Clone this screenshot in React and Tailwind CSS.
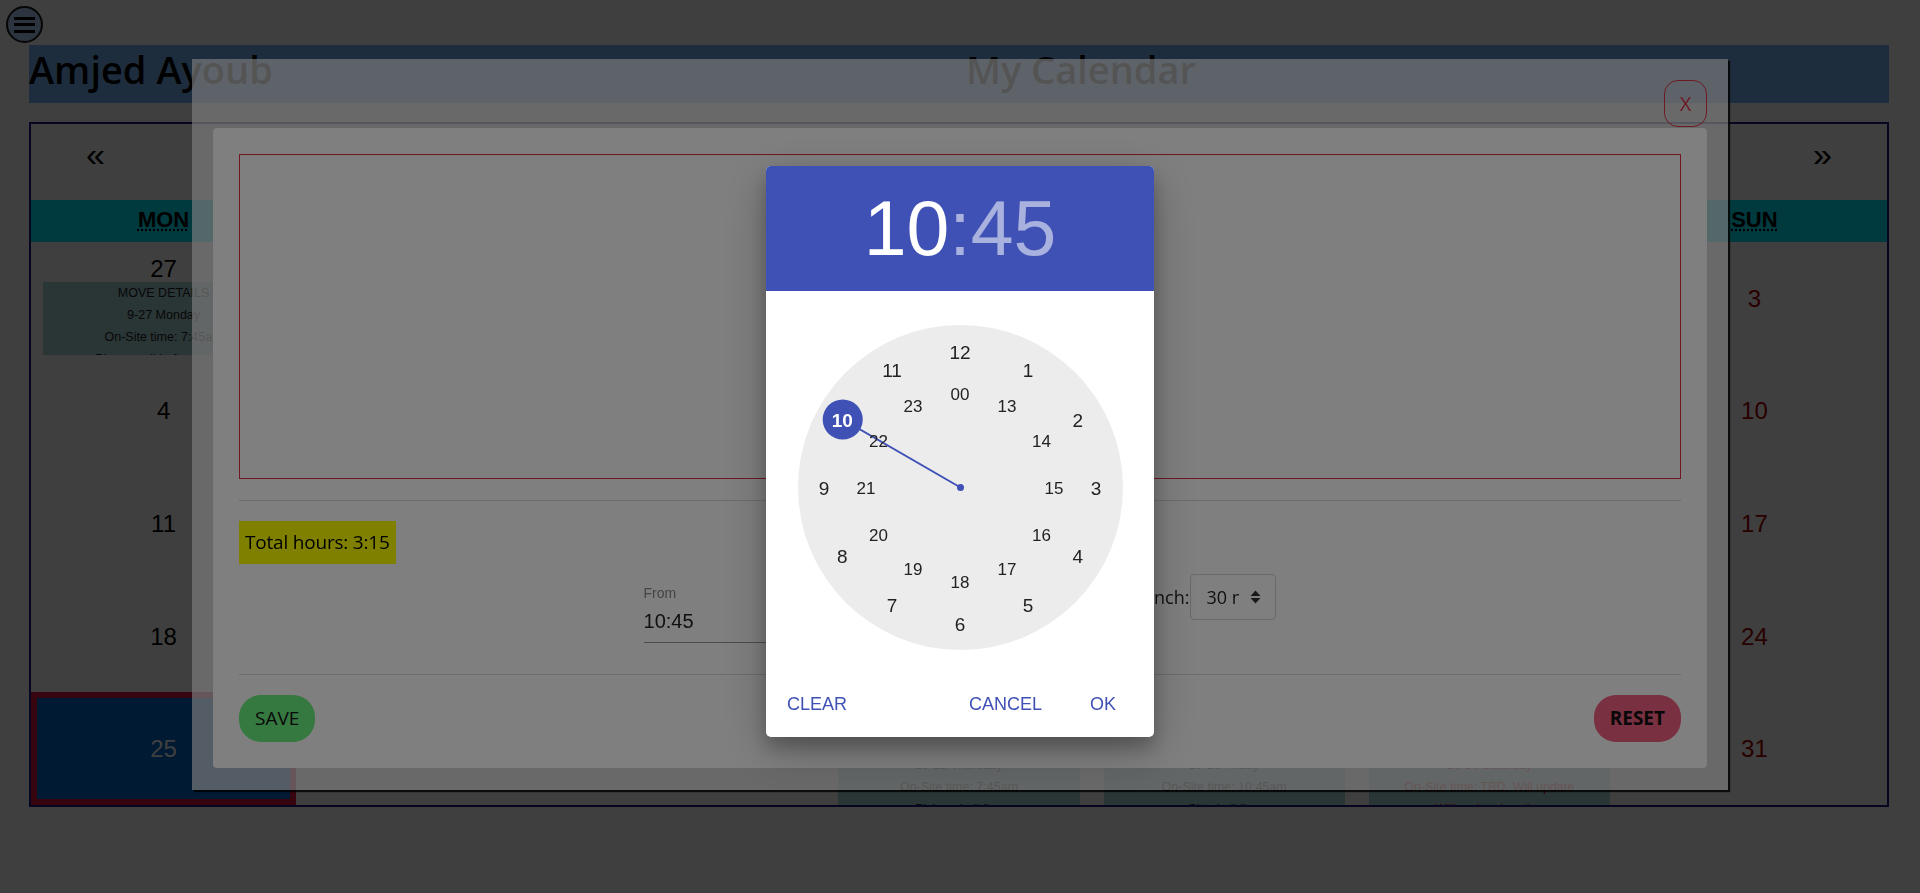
import React from 'react';

const SEGOE = { fontFamily: '"Open Sans", "Noto Sans", sans-serif' };
const ARIAL = { fontFamily: '"Liberation Sans", Arial, sans-serif' };

const DAYS = [
    ['MON', 'Monday'],
    ['TUE', 'Tuesday'],
    ['WED', 'Wednesday'],
    ['THU', 'Thursday'],
    ['FRI', 'Friday'],
    ['SAT', 'Saturday'],
    ['SUN', 'Sunday'],
];

const WEEKS = [
    [27, 28, 29, 30, 1, 2, 3],
    [4, 5, 6, 7, 8, 9, 10],
    [11, 12, 13, 14, 15, 16, 17],
    [18, 19, 20, 21, 22, 23, 24],
    [25, 26, 27, 28, 29, 30, 31],
];

// moves booked on the calendar, keyed "week-day"
const EVENTS = {
    '0-0': { date: '9-27 Monday', time: 'On-Site time: 7:45am', note: 'Please call before arrival' },
    '4-3': { date: '10-28 Thursday', time: 'On-Site time: 7:45am', note: 'Pickup: building' },
    '4-4': { date: '10-29 Friday', time: 'On-Site time: 10:45am', note: 'Site: building' },
    '4-5': { date: '10-30 Saturday', time: 'On-Site time: TBD. Will update', note: 'Will update location', red: true },
};

const OUTER = [12, 1, 2, 3, 4, 5, 6, 7, 8, 9, 10, 11];
const INNER = ['00', 13, 14, 15, 16, 17, 18, 19, 20, 21, 22, 23];

const EventCard = ({ ev }) => (
    <div className={`self-stretch mx-[12px] bg-[#a9d5d9] text-center text-[12.5px] leading-[22px] ${ev.red ? 'text-[#d00000]' : 'text-[#222]'}`}>
        <div>MOVE DETAILS</div>
        <div>{ev.date}</div>
        <div>{ev.time}</div>
        <div>{ev.note}</div>
    </div>
);

const DayCell = ({ w, d, day }) => {
    const ev = EVENTS[`${w}-${d}`];
    const today = w === 4 && d === 0;
    const sunday = d === 6;
    if (today) {
        return (
            <div className="flex items-center justify-center border-[6px] border-[#dc143c] bg-[#0068cc] text-white text-[24px] overflow-hidden">
                {day}
            </div>
        );
    }
    return (
        <div className={`min-h-0 flex flex-col items-center overflow-hidden ${ev ? 'pt-[13px]' : 'justify-center'}`}>
            <div className={`text-[24px] leading-[27px] ${sunday ? 'text-[#a00000]' : 'text-black'}`}>{day}</div>
            {ev && <EventCard ev={ev} />}
        </div>
    );
};

const Calendar = () => (
    <div style={ARIAL} className="ml-[29px] mt-[19px] w-[1860px] h-[685px] border-2 border-[#1a1a80] flex flex-col">
        <div className="shrink-0 h-[76px] flex items-center justify-between px-[55px] pb-[16px] text-[34px] text-black">
            <span>«</span>
            <span>»</span>
        </div>
        <div className="shrink-0 h-[42px] grid grid-cols-7 items-center bg-[#00e5f8] text-center text-[22px] font-bold text-black">
            {DAYS.map(([abbr, full]) => (
                <div key={abbr} className="pb-[3px]">
                    <abbr title={full}>{abbr}</abbr>
                </div>
            ))}
        </div>
        <div className="shrink-0 h-[563px] grid grid-cols-7 grid-rows-5 overflow-hidden">
            {WEEKS.map((week, w) =>
                week.map((day, d) => <DayCell key={`${w}-${d}`} w={w} d={d} day={day} />)
            )}
        </div>
    </div>
);

const ClockFace = () => {
    const c = 162.5;
    const pos = (i, r) => {
        const a = (i * 30 * Math.PI) / 180;
        return { left: c + r * Math.sin(a), top: c - r * Math.cos(a) };
    };
    const sel = pos(10, 136);
    return (
        <div className="relative w-[325px] h-[325px] mx-auto mt-[34px] rounded-full bg-[#ececec] text-[#222]">
            <svg className="absolute inset-0" width="325" height="325">
                <line x1={c} y1={c} x2={sel.left} y2={sel.top} stroke="#3f51b5" strokeWidth="2" />
                <circle cx={c} cy={c} r="3.5" fill="#3f51b5" />
                <circle cx={sel.left} cy={sel.top} r="20" fill="#3f51b5" />
            </svg>
            {OUTER.map((n, i) => (
                <div
                    key={`o${n}`}
                    style={pos(i, 136)}
                    className={`absolute -translate-x-1/2 -translate-y-1/2 text-[19px] leading-none ${n === 10 ? 'text-white font-bold' : ''}`}
                >
                    {n}
                </div>
            ))}
            {INNER.map((n, i) => (
                <div
                    key={`i${n}`}
                    style={pos(i, 94)}
                    className="absolute -translate-x-1/2 -translate-y-1/2 text-[17px] leading-none"
                >
                    {n}
                </div>
            ))}
        </div>
    );
};

const TimePicker = () => (
    <div style={ARIAL} className="fixed inset-0 flex justify-center pt-[166px]">
        <div className="w-[388px] h-[571px] bg-white rounded-[5px] overflow-hidden flex flex-col shadow-[0_14px_45px_rgba(0,0,0,0.25),0_10px_18px_rgba(0,0,0,0.22)]">
            <div className="shrink-0 h-[125px] bg-[#3f51b5] flex items-center justify-center text-[77px] leading-none">
                <span className="text-white">10</span>
                <span className="text-white/55">:45</span>
            </div>
            <ClockFace />
            <div className="mt-auto h-[66px] flex items-center justify-between pl-[21px] pr-[38px] text-[18px] text-[#3f51b5]">
                <span>CLEAR</span>
                <div className="flex gap-[48px]">
                    <span>CANCEL</span>
                    <span>OK</span>
                </div>
            </div>
        </div>
    </div>
);

const TimesheetModal = () => (
    <div style={SEGOE} className="fixed inset-0 flex justify-center pt-[59px]">
        <div className="w-[1536px] h-[731px] bg-white/[0.66] px-[21px] pt-[21px] pb-[22px] flex flex-col shadow-[2px_2px_1px_rgba(0,0,0,0.8)]">
            <div className="flex justify-end">
                <button className="w-[43px] h-[47px] border border-[#dc3545] rounded-[14px] text-[20px] text-[#dc3545]">X</button>
            </div>
            <div className="mt-[1px] flex-1 bg-white rounded-[4px] p-[26px] flex flex-col">
                <div className="h-[325px] border border-[#e03040]" />
                <div className="mt-[21px] border-t border-black/15" />
                <div className="mt-[20px] self-start h-[43px] px-[6px] flex items-center bg-[#ffff00] text-[19px] tracking-[-0.2px] text-black">
                    Total hours: 3:15
                </div>
                <div className="mt-[10px] flex justify-center items-start">
                    <div style={ARIAL} className="w-[200px] mt-[11px]">
                        <div className="text-[14px] leading-[16px] text-[#888]">From</div>
                        <div className="mt-[6px] pb-[7px] text-[20px] leading-[28px] text-[#222] border-b border-black/40">10:45</div>
                    </div>
                    <div style={ARIAL} className="w-[200px] mt-[11px] ml-[40px]">
                        <div className="text-[14px] leading-[16px] text-[#888]">To</div>
                        <div className="mt-[6px] pb-[7px] text-[20px] leading-[28px] text-[#222] border-b border-black/40">14:30</div>
                    </div>
                    <div className="ml-[50px] flex items-center h-[46px] text-[18px] text-[#222]">
                        <span className="mr-[1px]">Lunch:</span>
                        <div className="w-[86px] h-[46px] border border-[#ced4da] rounded-[4px] flex items-center pl-[15px]">
                            <div className="w-[33px] overflow-hidden whitespace-nowrap">30 min</div>
                            <svg className="ml-[11px]" width="11" height="16" viewBox="0 0 11 16">
                                <path d="M0.5 7 L5.5 1.5 L10.5 7 Z M0.5 9 L5.5 14.5 L10.5 9 Z" fill="#333" />
                            </svg>
                        </div>
                    </div>
                </div>
                <div className="mt-[31px] border-t border-black/15" />
                <div className="mt-[20px] flex justify-between">
                    <button className="h-[47px] px-[16px] rounded-[22px] bg-[#6af080] text-[19px] text-[#111]">SAVE</button>
                    <button className="h-[47px] px-[16px] rounded-[22px] bg-[#f26080] text-[19px] font-bold text-[#111]">RESET</button>
                </div>
            </div>
        </div>
    </div>
);

export default function App() {
    return (
        <div className="relative min-h-screen bg-white overflow-hidden">
            <button className="ml-[6px] mt-[6px] w-[37px] h-[37px] rounded-full border-2 border-[#1a1a1a] bg-[#b0d0ff] flex flex-col items-center justify-center gap-[3.5px]">
                <span className="w-[21px] h-[3px] bg-black" />
                <span className="w-[21px] h-[3px] bg-black" />
                <span className="w-[21px] h-[3px] bg-black" />
            </button>
            <header style={SEGOE} className="ml-[29px] mt-[2px] w-[1860px] h-[58px] bg-[#7ab4fa] flex items-center pb-[9px] text-[38px] font-semibold text-black">
                <span>Amjed Ayoub</span>
                <span className="flex-1 text-center">My Calendar</span>
            </header>
            <Calendar />

            <div className="fixed inset-0 bg-black/50" />
            <TimesheetModal />
            <div className="fixed inset-0 bg-black/50" />
            <TimePicker />
        </div>
    );
}
